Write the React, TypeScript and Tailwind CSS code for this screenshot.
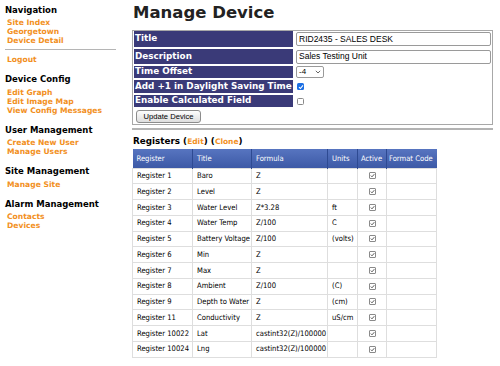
import React from "react";

const navSections = [
  { title: "Navigation", links: ["Site Index", "Georgetown", "Device Detail"], hr: true },
  { title: "Device Config", links: ["Edit Graph", "Edit Image Map", "View Config Messages"] },
  { title: "User Management", links: ["Create New User", "Manage Users"] },
  { title: "Site Management", links: ["Manage Site"] },
  { title: "Alarm Management", links: ["Contacts", "Devices"] },
];

const registers = [
  ["Register 1", "Baro", "Z", ""],
  ["Register 2", "Level", "Z", ""],
  ["Register 3", "Water Level", "Z*3.28", "ft"],
  ["Register 4", "Water Temp", "Z/100", "C"],
  ["Register 5", "Battery Voltage", "Z/100", "(volts)"],
  ["Register 6", "Min", "Z", ""],
  ["Register 7", "Max", "Z", ""],
  ["Register 8", "Ambient", "Z/100", "(C)"],
  ["Register 9", "Depth to Water", "Z", "(cm)"],
  ["Register 11", "Conductivity", "Z", "uS/cm"],
  ["Register 10022", "Lat", "castint32(Z)/100000", ""],
  ["Register 10024", "Lng", "castint32(Z)/100000", ""],
];

function TinyCheck() {
  return (
    <svg width="7" height="7" viewBox="0 0 7 7" className="mx-auto block">
      <rect x="0.5" y="0.5" width="6" height="6" rx="0.5" fill="#fff" stroke="#8a8a8a" />
      <path d="M1.8 3.6 L3 4.8 L5.3 2.2" fill="none" stroke="#444" strokeWidth="0.9" />
    </svg>
  );
}

function Sidebar() {
  return (
    <div className="w-[132px] shrink-0 pl-[5px] pt-[4.5px] font-['DejaVu_Sans',sans-serif]">
      {navSections.map((s, i) => (
        <div key={s.title} className={i === 0 ? "" : "mt-[10px]"}>
          <div className="text-[8.5px] font-bold leading-[11px] text-black">{s.title}</div>
          <div className="mt-[2.5px] pl-[2px]">
            {s.links.map((l) => (
              <div key={l} className="text-[7.6px] font-bold leading-[9px] text-[#f2901e]">
                {l}
              </div>
            ))}
          </div>
          {s.hr && (
            <>
              <div className="mt-[4px] h-[1px] w-[111px] bg-[#b5b5b5]" />
              <div className="mt-[5px] pl-[2px] text-[7.6px] font-bold leading-[9px] text-[#f2901e]">
                Logout
              </div>
            </>
          )}
        </div>
      ))}
    </div>
  );
}

function Label({ children, h }: { children: React.ReactNode; h: string }) {
  return (
    <div
      className={`${h} flex items-center bg-[#3a3a78] pl-[1px] text-[8.8px] font-bold text-white font-['DejaVu_Sans',sans-serif] whitespace-nowrap`}
    >
      {children}
    </div>
  );
}

function DeviceForm() {
  return (
    <div className="mt-[7.5px] w-[361px] border border-[#a8a8a8] px-[1px] pt-[0px] pb-[1px]">
      <div className="grid grid-cols-[159px_1fr] gap-x-[2px] gap-y-[2px]">
        <Label h="h-[16px]">Title</Label>
        <div className="flex items-center pl-[1px]">
          <div className="flex h-[14px] w-[195px] items-center rounded-[2px] border border-[#9a9a9a] bg-white pl-[2px] font-['Liberation_Sans',sans-serif] text-[8.5px] text-black">
            RID2435 - SALES DESK
          </div>
        </div>
        <Label h="h-[15px]">Description</Label>
        <div className="flex items-center pl-[1px]">
          <div className="flex h-[14px] w-[195px] items-center rounded-[2px] border border-[#9a9a9a] bg-white pl-[2px] font-['Liberation_Sans',sans-serif] text-[8.5px] text-black">
            Sales Testing Unit
          </div>
        </div>
        <Label h="h-[12px]">Time Offset</Label>
        <div className="flex items-center pl-[1px]">
          <div className="flex h-[12px] w-[28px] items-center justify-between rounded-[2px] border border-[#9a9a9a] bg-white pl-[2px] pr-[2px] font-['Liberation_Sans',sans-serif] text-[8px] text-black">
            <span>-4</span>
            <svg width="6" height="4" viewBox="0 0 6 4">
              <path d="M0.8 0.8 L3 3 L5.2 0.8" fill="none" stroke="#555" strokeWidth="0.9" />
            </svg>
          </div>
        </div>
        <Label h="h-[13px]">Add +1 in Daylight Saving Time</Label>
        <div className="flex items-center pl-[2px]">
          <span className="flex h-[7px] w-[7px] items-center justify-center rounded-[1.5px] bg-[#1c6fe3]">
            <svg width="6" height="6" viewBox="0 0 6 6">
              <path d="M1 3.2 L2.4 4.5 L5 1.4" fill="none" stroke="#fff" strokeWidth="1.1" />
            </svg>
          </span>
        </div>
        <Label h="h-[12px]">Enable Calculated Field</Label>
        <div className="flex items-center pl-[2px]">
          <span className="h-[7px] w-[7px] rounded-[1.5px] border border-[#8a8a8a] bg-white" />
        </div>
      </div>
      <div className="mt-[3px] pl-[2px]">
        <div className="flex h-[13px] w-[65px] items-center justify-center rounded-[3px] border border-[#8c8c8c] bg-gradient-to-b from-[#fdfdfd] to-[#dedede] font-['Liberation_Sans',sans-serif] text-[7.6px] text-black">
          Update Device
        </div>
      </div>
    </div>
  );
}

function RegistersTable() {
  const th =
    "border-l border-[#2e4a92] first:border-l-0 px-[4px] text-left font-normal text-white whitespace-nowrap overflow-hidden";
  const td = "border border-[#dedede] px-[4px] whitespace-nowrap overflow-hidden";
  return (
    <table className="mt-[2px] w-[304px] table-fixed border-collapse font-['DejaVu_Sans_Condensed','DejaVu_Sans',sans-serif] text-[7.6px] text-black">
      <colgroup>
        <col className="w-[60px]" />
        <col className="w-[59px]" />
        <col className="w-[76px]" />
        <col className="w-[30px]" />
        <col className="w-[29px]" />
        <col className="w-[50px]" />
      </colgroup>
      <thead>
        <tr className="h-[19px] bg-gradient-to-b from-[#5775c0] to-[#3d59a6]">
          <th className={th}>Register</th>
          <th className={th}>Title</th>
          <th className={th}>Formula</th>
          <th className={th}>Units</th>
          <th className={`${th} !px-[3px]`}>Active</th>
          <th className={`${th} !px-[2px]`}>Format Code</th>
        </tr>
      </thead>
      <tbody>
        {registers.map((r) => (
          <tr key={r[0]} className="h-[15.75px] bg-white">
            <td className={td}>{r[0]}</td>
            <td className={td}>{r[1]}</td>
            <td className={td}>{r[2]}</td>
            <td className={td}>{r[3]}</td>
            <td className={td}>
              <TinyCheck />
            </td>
            <td className={td}></td>
          </tr>
        ))}
      </tbody>
    </table>
  );
}

export default function App() {
  return (
    <div className="flex h-[366px] w-[500px] overflow-hidden bg-white">
      <Sidebar />
      <div className="w-[362px] pt-[2.5px]">
        <h1 className="pl-[1px] font-['DejaVu_Sans',sans-serif] text-[16.5px] font-bold leading-[20px] text-[#222]">
          Manage Device
        </h1>
        <DeviceForm />
        <div className="mt-[3px] h-[2px] w-[361px] bg-[#b3b3b3]" />
        <div className="mt-[6px] pl-[1px] font-['DejaVu_Sans',sans-serif] text-[8.8px] font-bold leading-[11px] text-black">
          Registers (<span className="text-[7.5px] text-[#f2901e]">Edit</span>) (
          <span className="text-[7.5px] text-[#f2901e]">Clone</span>)
        </div>
        <RegistersTable />
      </div>
    </div>
  );
}
